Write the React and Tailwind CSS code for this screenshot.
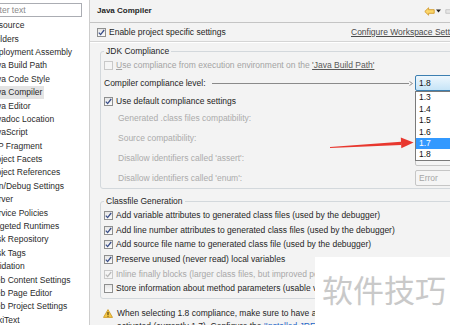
import React from 'react';

const treeItems = [
  'Resource', 'Builders', 'Deployment Assembly', 'Java Build Path', 'Java Code Style',
  'Java Compiler', 'Java Editor', 'Javadoc Location', 'JavaScript', 'JSP Fragment',
  'Project Facets', 'Project References', 'Run/Debug Settings', 'Server', 'Service Policies',
  'Targeted Runtimes', 'Task Repository', 'Task Tags', 'Validation', 'Web Content Settings',
  'Web Page Editor', 'Web Project Settings', 'WikiText'
];

const levels = ['1.3', '1.4', '1.5', '1.6', '1.7', '1.8'];

const compatRows = [
  { label: 'Generated .class files compatibility:', value: '1.8', h: 'h-[19px]' },
  { label: 'Source compatibility:', value: '1.8', h: 'h-[20px]' },
  { label: "Disallow identifiers called 'assert':", value: 'Error', h: 'h-[20px]' },
  { label: "Disallow identifiers called 'enum':", value: 'Error', h: 'h-[20px]' }
];

const classfileOptions = [
  { label: 'Add variable attributes to generated class files (used by the debugger)', checked: true },
  { label: 'Add line number attributes to generated class files (used by the debugger)', checked: true },
  { label: 'Add source file name to generated class file (used by the debugger)', checked: true },
  { label: 'Preserve unused (never read) local variables', checked: true },
  { label: 'Inline finally blocks (larger class files, but improved performance)', checked: true, disabled: true },
  { label: 'Store information about method parameters (usable via reflection)', checked: false }
];

const Check = ({ checked, disabled }) => (
  <span
    className={`flex h-[9px] w-[9px] shrink-0 items-center justify-center border ${
      disabled ? 'border-[#c9c9c9] bg-[#f5f5f5]' : 'border-[#8e8f8f] bg-linear-to-b from-[#e6e6e6] to-[#fbfbfb]'
    }`}
  >
    {checked && (
      <svg width="7" height="7" viewBox="0 0 7 7">
        <path d="M0.8 3.6 L2.6 5.6 L6.2 1" fill="none" stroke={disabled ? '#b8b8b8' : '#3a4f8a'} strokeWidth="1.3" />
      </svg>
    )}
  </span>
);

const Combo = ({ value, active }) => (
  <div
    className={`flex h-[16px] w-[40px] shrink-0 items-center rounded-[2px] border pl-[3px] ${
      active
        ? 'border-[#3c7fb1] bg-linear-to-b from-[#eef7fd] to-[#c6e4f7] text-[#111]'
        : 'border-[#c6c6c6] bg-[#f5f5f5] text-[#a6a6a6]'
    }`}
  >
    {value}
  </div>
);

const App = () => {
  return (
    <div className="relative flex h-[325px] w-[450px] overflow-hidden bg-[#f3f3f3] font-['Liberation_Sans',Arial,sans-serif] text-[8.5px] text-[#1f1f1f]">
      {/* Left tree */}
      <div className="w-[90px] shrink-0 overflow-hidden border-r border-[#cdcdcd] bg-white">
        <div className="ml-[-33px] w-[123px]">
          <div className="ml-[5px] mt-[3px] flex h-[14px] w-[110px] items-center border border-[#abadb3] bg-white pl-[2px] text-[#8a8a8a]">
            type filter text
          </div>
          <div className="mt-[2px]">
            {treeItems.map(item => (
              <div key={item} className="flex h-[13.4px] items-center whitespace-nowrap pl-[19px] text-[#2a2a2a]">
                <span className={`px-[2px] leading-[13px] ${item === 'Java Compiler' ? 'bg-[#e4e4e4]' : ''}`}>{item}</span>
              </div>
            ))}
          </div>
        </div>
      </div>

      {/* Right page */}
      <div className="w-[360px] shrink-0 overflow-hidden">
        {/* Title */}
        <div className="flex h-[23px] items-center border-b border-[#c4c4c4] pl-[7px]">
          <span className="text-[8px] font-bold">Java Compiler</span>
          <div className="ml-auto mr-[-6px] flex items-center">
            <svg width="11" height="9" viewBox="0 0 11 9">
              <path d="M0.8 4.5 L4.6 0.8 L4.6 2.7 L10.2 2.7 L10.2 6.3 L4.6 6.3 L4.6 8.2 Z" fill="#fbd66a" stroke="#d29a2a" strokeWidth="0.9" strokeLinejoin="round" />
            </svg>
            <svg className="ml-[1px]" width="5" height="4" viewBox="0 0 5 4">
              <path d="M0 0.5 L5 0.5 L2.5 3.5 Z" fill="#222" />
            </svg>
            <svg className="ml-[4px]" width="11" height="9" viewBox="0 0 11 9">
              <path d="M10.2 4.5 L6.4 0.8 L6.4 2.7 L0.8 2.7 L0.8 6.3 L6.4 6.3 L6.4 8.2 Z" fill="#e6e6e6" stroke="#c4c4c4" strokeWidth="0.9" strokeLinejoin="round" />
            </svg>
          </div>
        </div>

        {/* Enable row */}
        <div className="flex h-[18px] items-center whitespace-nowrap pl-[7px]">
          <div className="flex w-[254px] shrink-0 items-center gap-[3px]">
            <Check checked />
            <span>Enable project specific settings</span>
          </div>
          <span className="shrink-0 text-[#4a4a4a] underline">Configure Workspace Settings...</span>
        </div>
        <div className="h-[2px] border-t border-[#d5d5d5] bg-white" />

        {/* JDK Compliance */}
        <fieldset className="ml-[10px] mt-[2px] w-[360px] rounded-[3px] border border-[#d3d8dc] pl-[3px] pr-[4px] whitespace-nowrap">
          <legend className="px-[2px] leading-[12px]">JDK Compliance</legend>
          <div className="flex h-[16px] items-center gap-[3px] text-[#a3a3a3]">
            <Check disabled />
            <span>
              <span className="underline">U</span>se compliance from execution environment on the{' '}
              <span className="text-[#595959] underline">'Java Build Path'</span>
            </span>
          </div>
          <div className="flex h-[20px] items-center">
            <span>Compiler compliance level:</span>
            <div className="ml-[6px] h-px flex-1 bg-[#8a8a8a]" />
            <svg width="4" height="5" viewBox="0 0 4 5">
              <path d="M0.5 0.5 L3.5 2.5 L0.5 4.5" fill="none" stroke="#7a7a7a" strokeWidth="0.8" />
            </svg>
            <div className="relative z-10 ml-[2px]">
              <Combo value="1.8" active />
              <div className="absolute left-0 top-full w-[40px] border border-[#7a7a7a] bg-white">
                {levels.map(level => (
                  <div
                    key={level}
                    className={`flex h-[11.4px] items-center pl-[3px] ${
                      level === '1.7' ? 'bg-[#3399ff] text-white' : 'text-[#111]'
                    }`}
                  >
                    {level}
                  </div>
                ))}
              </div>
            </div>
          </div>
          <div className="flex h-[16px] items-center gap-[3px]">
            <Check checked />
            <span>Use default compliance settings</span>
          </div>
          {compatRows.map(row => (
            <div key={row.label} className={`flex items-center ${row.h}`}>
              <span className="flex-1 pl-[14px] text-[#ababab]">{row.label}</span>
              <Combo value={row.value} />
            </div>
          ))}
        </fieldset>

        {/* Classfile Generation */}
        <fieldset className="ml-[10px] mt-[6px] w-[360px] rounded-[3px] border border-[#d3d8dc] pb-[2px] pl-[3px] pt-[1px] whitespace-nowrap">
          <legend className="px-[2px] leading-[12px]">Classfile Generation</legend>
          {classfileOptions.map(opt => (
            <div
              key={opt.label}
              className={`flex h-[14.7px] items-center gap-[3px] ${opt.disabled ? 'text-[#a8a8a8]' : ''}`}
            >
              <Check checked={opt.checked} disabled={opt.disabled} />
              <span>{opt.label}</span>
            </div>
          ))}
        </fieldset>

        {/* Warning */}
        <div className="mt-[8px] flex whitespace-nowrap pl-[13px] leading-[12.5px]">
          <svg className="mt-[2px] shrink-0" width="10" height="9" viewBox="0 0 10 9">
            <path d="M5 0.6 L9.5 8.4 L0.5 8.4 Z" fill="#f7c948" stroke="#c8931c" strokeWidth="0.8" strokeLinejoin="round" />
            <rect x="4.5" y="3" width="1" height="3" fill="#3a2a00" />
            <rect x="4.5" y="6.7" width="1" height="1" fill="#3a2a00" />
          </svg>
          <div className="ml-[4px]">
            <div>When selecting 1.8 compliance, make sure to have a compatible JRE installed and</div>
            <div>
              activated (currently 1.7). Configure the{' '}
              <span className="text-[#1a64c8] underline">'Installed JREs'</span> and 'Execution Environments'
            </div>
          </div>
        </div>
      </div>

      {/* Watermark */}
      <div className="absolute left-[315px] top-[257px] h-[68px] w-[135px] bg-white">
        <div className="mt-[16px] pl-[7px] font-['Noto_Sans_CJK_SC',sans-serif] text-[31px] leading-[31px] text-[#c9c9c9]">
          软件技巧
        </div>
      </div>

      {/* Red annotation arrow */}
      <svg className="pointer-events-none absolute left-0 top-0" width="450" height="325" viewBox="0 0 450 325">
        <polygon points="330,147.1 401,141.8 401.2,145 330,147.9" fill="#e8372e" />
        <polygon points="413.6,142.6 400.8,137.4 401.3,148.2" fill="#e8372e" />
      </svg>
    </div>
  );
};

export default App;
